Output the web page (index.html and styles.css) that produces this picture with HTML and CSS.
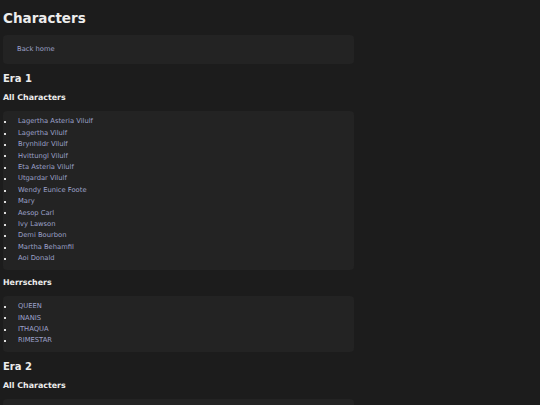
FILE: index.html
```html
<!DOCTYPE html>
<html lang="en">
<head>
    <meta charset="UTF-8">
    <meta name="viewport" content="width=device-width, initial-scale=1.0">
    <title>Characters</title>
    <link rel="stylesheet" href="styles.css">
</head>
<body>
    <div class="page">
        <h1>Characters</h1>
        <nav class="panel nav">
            <a href="#">Back home</a>
        </nav>

        <h2>Era 1</h2>
        <h3>All Characters</h3>
        <ul class="panel list">
            <li><a href="#">Lagertha Asteria Vilulf</a></li>
            <li><a href="#">Lagertha Vilulf</a></li>
            <li><a href="#">Brynhildr Vilulf</a></li>
            <li><a href="#">Hvittungl Vilulf</a></li>
            <li><a href="#">Eta Asteria Vilulf</a></li>
            <li><a href="#">Utgardar Vilulf</a></li>
            <li><a href="#">Wendy Eunice Foote</a></li>
            <li><a href="#">Mary</a></li>
            <li><a href="#">Aesop Carl</a></li>
            <li><a href="#">Ivy Lawson</a></li>
            <li><a href="#">Demi Bourbon</a></li>
            <li><a href="#">Martha Behamfil</a></li>
            <li><a href="#">Aoi Donald</a></li>
        </ul>
        <h3>Herrschers</h3>
        <ul class="panel list">
            <li><a href="#">QUEEN</a></li>
            <li><a href="#">INANIS</a></li>
            <li><a href="#">ITHAQUA</a></li>
            <li><a href="#">RIMESTAR</a></li>
        </ul>

        <h2>Era 2</h2>
        <h3>All Characters</h3>
        <ul class="panel list">
            <li><a href="#">Nameless</a></li>
            <li><a href="#">Hilda</a></li>
        </ul>
    </div>
</body>
</html>
```

FILE: styles.css
```css
body {
    margin: 0;
    padding: 0 3px;
    background: #1c1c1c;
    color: #ececec;
    font-family: 'DejaVu Sans', Verdana, sans-serif;
    font-size: 6.75px;
    line-height: 11.4px;
}

.page {
    max-width: 351px;
}

h1 {
    font-size: 13.5px;
    line-height: 16px;
    margin: 9.5px 0 9px;
}

h2 {
    font-size: 10px;
    line-height: 12px;
    margin: 9px 0 8px;
}

h3 {
    font-size: 7.9px;
    line-height: 9px;
    margin: 8.5px 0;
}

a {
    color: #9ca1c9;
    text-decoration: none;
}

.panel {
    background: #232323;
    border-radius: 4px;
}

.nav {
    padding: 9px 14px;
}

.list {
    list-style: none;
    margin: 0;
    padding: 5.5px 0 5px;
}

.list li {
    display: flex;
    align-items: center;
}

.list li::before {
    content: "";
    width: 2px;
    height: 2px;
    background: #dddddd;
    margin: 0 12px 0 1px;
}
```
